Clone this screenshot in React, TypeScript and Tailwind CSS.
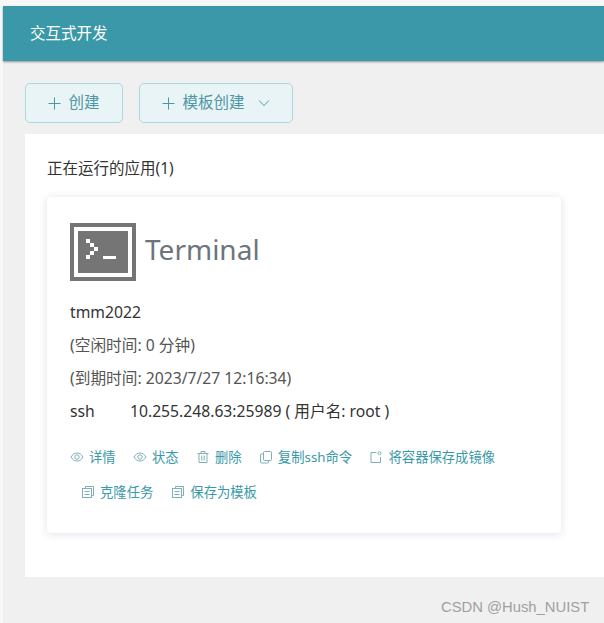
import React from "react";

function Eye() {
  return (
    <svg width="14" height="14" viewBox="0 0 14 14" fill="none" stroke="currentColor" strokeWidth="1">
      <path d="M1 7c1.6-2.7 3.6-4 6-4s4.400 1.300 6 4c-1.600 2.700-3.600 4-6 4s-4.400-1.300-6-4z" />
      <circle cx="7" cy="7" r="2.200" />
    </svg>
  );
}
function Trash() {
  return (
    <svg width="14" height="14" viewBox="0 0 14 14" fill="none" stroke="currentColor" strokeWidth="1">
      <path d="M1.500 3.500h11M5 3.500V1.500h4v2M3 3.500V12.500h8V3.500M5.800 5.500v5M8.200 5.500v5" />
    </svg>
  );
}
function Copy() {
  return (
    <svg width="14" height="14" viewBox="0 0 14 14" fill="none" stroke="currentColor" strokeWidth="1">
      <rect x="4.500" y="1.500" width="8" height="9" rx="1" />
      <path d="M4.500 4H2.500a1 1 0 0 0-1 1v7a1 1 0 0 0 1 1h6a1 1 0 0 0 1-1v-1.500" />
    </svg>
  );
}
function Save() {
  return (
    <svg width="14" height="14" viewBox="0 0 14 14" fill="none" stroke="currentColor" strokeWidth="1">
      <path d="M7.500 2.500H2v10h9.500V7" />
      <circle cx="10.500" cy="3.200" r="1.500" />
    </svg>
  );
}
function Doc() {
  return (
    <svg width="14" height="14" viewBox="0 0 14 14" fill="none" stroke="currentColor" strokeWidth="1">
      <path d="M4.500 3V1.500h8v9H10.500" />
      <rect x="1.500" y="3.500" width="9" height="9" />
      <path d="M3.500 6.500h5M3.500 9.500h5" />
    </svg>
  );
}
function Plus() {
  return (
    <svg width="13" height="13" viewBox="0 0 13 13" stroke="currentColor" strokeWidth="1">
      <path d="M6.500 0.500v12M0.500 6.500h12" />
    </svg>
  );
}
function Chevron() {
  return (
    <svg width="12" height="8" viewBox="0 0 12 8" fill="none" stroke="currentColor" strokeWidth="1">
      <path d="M1 1.500l5 5 5-5" />
    </svg>
  );
}
function TerminalLogo() {
  return (
    <svg width="66" height="58" viewBox="0 0 66 58" shapeRendering="crispEdges" className="shrink-0">
      <rect width="66" height="58" fill="#757575" />
      <rect x="4" y="4" width="58" height="50" fill="#ffffff" />
      <rect x="8" y="8" width="50" height="42" fill="#757575" />
      <g fill="#ffffff">
        <rect x="16" y="16" width="4" height="4" />
        <rect x="20" y="20" width="4" height="4" />
        <rect x="24" y="24" width="4" height="4" />
        <rect x="20" y="28" width="4" height="4" />
        <rect x="16" y="32" width="4" height="4" />
        <rect x="33" y="33" width="13" height="3" />
      </g>
    </svg>
  );
}

function Action({ icon, label }: { icon: React.ReactNode; label: string }) {
  return (
    <span className="flex items-center gap-[5px] text-[13.33px] leading-[20px] text-[#3a9aa8]">
      <span className="text-[#7fb0b8]">{icon}</span>
      {label}
    </span>
  );
}

export default function App() {
  return (
    <div className="relative h-[623px] w-[604px] overflow-hidden bg-[#f8f8f8] pl-[3px] text-[#333333]">
      <div className="[font-family:'Noto_Sans','Noto_Sans_CJK_SC',sans-serif] flex h-full flex-col bg-[#f0f0f0]">
        <div className="h-[6px] shrink-0 bg-[#f8f8f8]" />
        <header className="flex h-[55px] shrink-0 items-center bg-[#3a98a8] pl-[27px] text-[15.5px] text-white shadow-[0_1px_2px_rgba(0,0,0,0.4)]">
          交互式开发
        </header>
        <div className="flex gap-4 pl-[22px] pt-[22px]">
          <button className="flex h-[40px] w-[98px] items-center justify-center gap-[7px] rounded-[5px] border border-[#a9d8e0] bg-[#e9f4f7] text-[15.5px] text-[#4d97a3]">
            <Plus />
            创建
          </button>
          <button className="flex h-[40px] w-[154px] items-center justify-center gap-[7px] rounded-[5px] border border-[#a9d8e0] bg-[#e9f4f7] text-[15.5px] text-[#4d97a3]">
            <Plus />
            模板创建
            <span className="ml-[6px]"><Chevron /></span>
          </button>
        </div>
        <main className="ml-[22px] mt-[11px] h-[443px] bg-white pl-[22px] pt-[23px]">
          <h2 className="text-[15.5px] leading-[22px] text-[#333333]">正在运行的应用(1)</h2>
          <section className="mt-[18px] h-[336px] w-[514px] rounded-[4px] bg-white pl-[23px] pt-[26px] shadow-[0_1px_8px_rgba(50,60,120,0.14)]">
            <div className="flex items-center gap-[9px]">
              <TerminalLogo />
              <span className="-mt-[7px] text-[28px] leading-[40px] text-[#6c757d]">Terminal</span>
            </div>
            <div className="mt-[15px] flex flex-col text-[15.7px] leading-[33px]">
              <p className="text-[#333333]">tmm2022</p>
              <p className="text-[#555555]">(空闲时间: 0 分钟)</p>
              <p className="text-[#555555]">(到期时间: 2023/7/27 12:16:34)</p>
              <p className="flex text-[#333333]">
                <span className="w-[60px]">ssh</span>
                <span>10.255.248.63:25989 ( 用户名: root )</span>
              </p>
            </div>
            <div className="mt-[19px] flex gap-[17.3px]">
              <Action icon={<Eye />} label="详情" />
              <Action icon={<Eye />} label="状态" />
              <Action icon={<Trash />} label="删除" />
              <Action icon={<Copy />} label="复制ssh命令" />
              <Action icon={<Save />} label="将容器保存成镜像" />
            </div>
            <div className="mt-[15px] flex gap-[18px] pl-[11px]">
              <Action icon={<Doc />} label="克隆任务" />
              <Action icon={<Doc />} label="保存为模板" />
            </div>
          </section>
        </main>
      </div>
      <span className="absolute left-[441px] top-[598px] [font-family:'Liberation_Sans',sans-serif] text-[14.8px] leading-[18px] text-[#a0a0a0]">
        CSDN @Hush_NUIST
      </span>
    </div>
  );
}
